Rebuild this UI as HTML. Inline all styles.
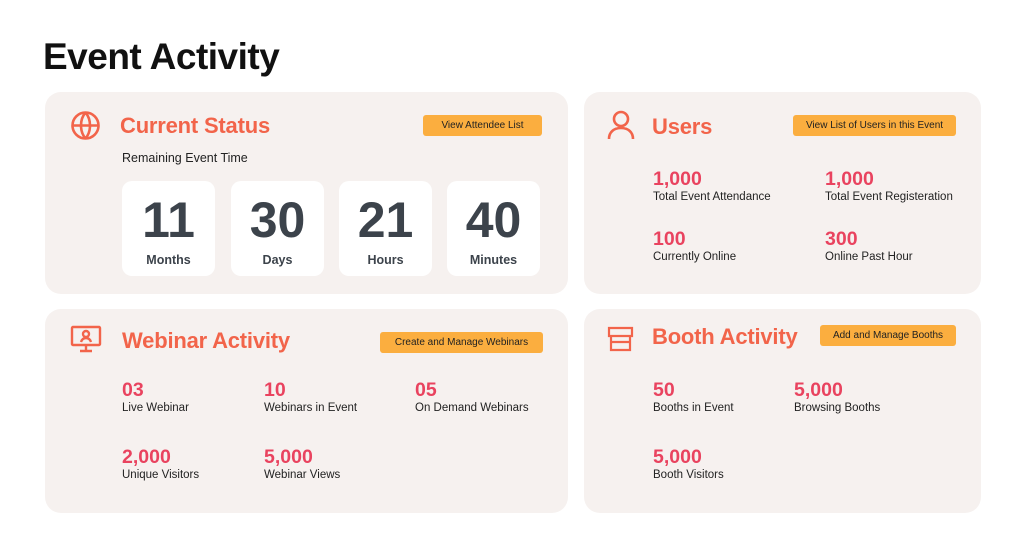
<!DOCTYPE html>
<html><head><meta charset="utf-8"><style>
*{margin:0;padding:0;box-sizing:border-box}
body{width:1024px;height:550px;background:#fff;font-family:"Liberation Sans",sans-serif;position:relative;overflow:hidden;color:#222}
.a{position:absolute}
h1{position:absolute;left:43px;top:36px;font-size:37px;font-weight:bold;color:#111;letter-spacing:-0.5px}
.card{position:absolute;background:#f6f1ef;border-radius:16px}
.t{position:absolute;font-size:22px;font-weight:bold;color:#f2644a;white-space:nowrap;letter-spacing:-0.2px}
.btn{position:absolute;background:#fbae3f;border-radius:3px;font-size:10px;color:#222;text-align:center;line-height:21px;height:21px;white-space:nowrap}
.n{position:absolute;font-size:19.5px;font-weight:bold;color:#e9435f;white-space:nowrap}
.l{position:absolute;font-size:11.5px;color:#222;white-space:nowrap}
.box{position:absolute;top:181px;width:93px;height:95px;background:#fff;border-radius:10px;text-align:center;color:#3c434b}
.box b{display:block;font-size:50px;line-height:50px;margin-top:14px}
.box span{display:block;font-size:12.5px;font-weight:bold;margin-top:8px}
</style></head><body>
<h1>Event Activity</h1>

<div class="card" style="left:45px;top:92px;width:523px;height:202px"></div>
<svg class="a" style="left:70px;top:110px" width="31" height="31" viewBox="0 0 31 31" fill="none" stroke="#f2644a" stroke-width="2.6"><circle cx="15.5" cy="15.5" r="13"/><path d="M2.5 15.5h26M15.5 2.5c-6 7-6 19 0 26M15.5 2.5c6 7 6 19 0 26"/></svg>
<div class="t" style="left:120px;top:113px">Current Status</div>
<div class="btn" style="left:423px;top:115px;width:119px">View Attendee List</div>
<div class="l" style="left:122px;top:151px;font-size:12.5px">Remaining Event Time</div>
<div class="box" style="left:122px"><b>11</b><span>Months</span></div>
<div class="box" style="left:231px"><b>30</b><span>Days</span></div>
<div class="box" style="left:339px"><b>21</b><span>Hours</span></div>
<div class="box" style="left:447px"><b>40</b><span>Minutes</span></div>

<div class="card" style="left:584px;top:92px;width:397px;height:202px"></div>
<svg class="a" style="left:607px;top:110px" width="28" height="30" viewBox="0 0 28 30" fill="none" stroke="#f2644a" stroke-width="2.6"><circle cx="14" cy="9" r="7"/><path d="M2 29c0-7 5-11 12-11s12 4 12 11"/></svg>
<div class="t" style="left:652px;top:114px">Users</div>
<div class="btn" style="left:793px;top:115px;width:163px">View List of Users in this Event</div>
<div class="n" style="left:653px;top:168px">1,000</div><div class="l" style="left:653px;top:191px">Total Event Attendance</div>
<div class="n" style="left:825px;top:168px">1,000</div><div class="l" style="left:825px;top:191px">Total Event Registeration</div>
<div class="n" style="left:653px;top:228px">100</div><div class="l" style="left:653px;top:251px">Currently Online</div>
<div class="n" style="left:825px;top:228px">300</div><div class="l" style="left:825px;top:251px">Online Past Hour</div>

<div class="card" style="left:45px;top:309px;width:523px;height:204px"></div>
<svg class="a" style="left:70px;top:325px" width="32" height="28" viewBox="0 0 32 28" fill="none" stroke="#f2644a" stroke-width="2.4"><rect x="2" y="2" width="28" height="18" rx="1"/><circle cx="16" cy="9" r="3"/><path d="M11 17c1-3 3-4 5-4s4 1 5 4M16 20v5M10 26h12"/></svg>
<div class="t" style="left:122px;top:328px">Webinar Activity</div>
<div class="btn" style="left:380px;top:332px;width:163px">Create and Manage Webinars</div>
<div class="n" style="left:122px;top:379px">03</div><div class="l" style="left:122px;top:402px">Live Webinar</div>
<div class="n" style="left:264px;top:379px">10</div><div class="l" style="left:264px;top:402px">Webinars in Event</div>
<div class="n" style="left:415px;top:379px">05</div><div class="l" style="left:415px;top:402px">On Demand Webinars</div>
<div class="n" style="left:122px;top:446px">2,000</div><div class="l" style="left:122px;top:469px">Unique Visitors</div>
<div class="n" style="left:264px;top:446px">5,000</div><div class="l" style="left:264px;top:469px">Webinar Views</div>

<div class="card" style="left:584px;top:309px;width:397px;height:204px"></div>
<svg class="a" style="left:607px;top:325px" width="27" height="27" viewBox="0 0 27 27" fill="none" stroke="#f2644a" stroke-width="2.2"><path d="M2 3h23v8H2zM4 11v14h19V11M4 17h19"/></svg>
<div class="t" style="left:652px;top:324px">Booth Activity</div>
<div class="btn" style="left:820px;top:325px;width:136px">Add and Manage Booths</div>
<div class="n" style="left:653px;top:379px">50</div><div class="l" style="left:653px;top:402px">Booths in Event</div>
<div class="n" style="left:794px;top:379px">5,000</div><div class="l" style="left:794px;top:402px">Browsing Booths</div>
<div class="n" style="left:653px;top:446px">5,000</div><div class="l" style="left:653px;top:469px">Booth Visitors</div>
</body></html>
